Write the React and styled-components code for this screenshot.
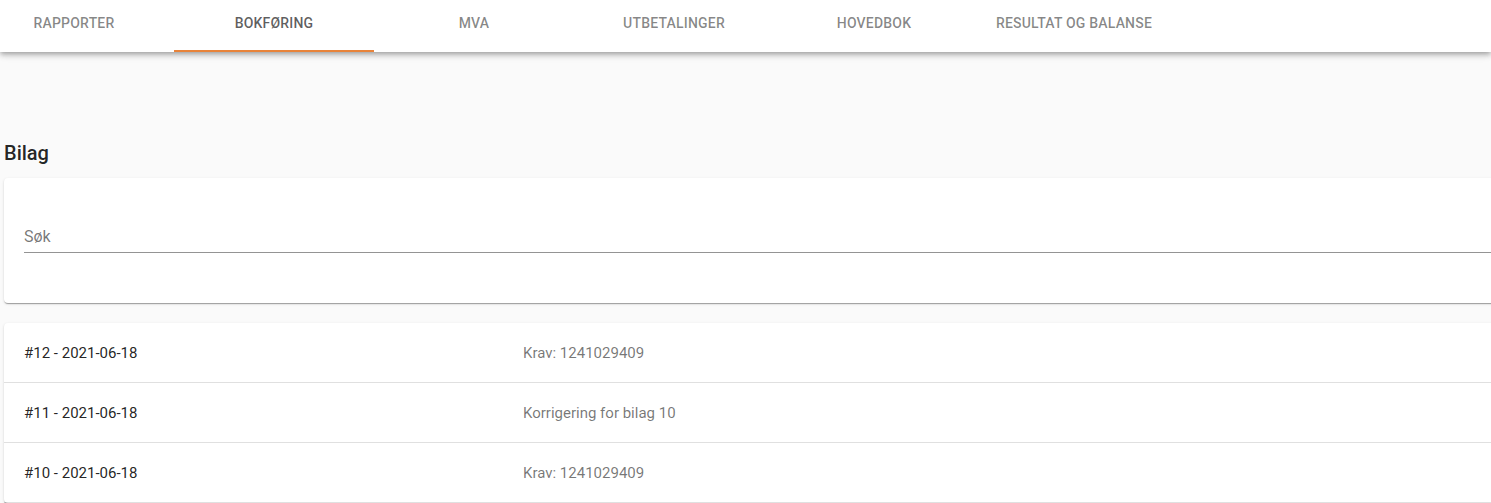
import React from 'react';
import styled, { createGlobalStyle } from 'styled-components';

const GlobalStyle = createGlobalStyle`
  body {
    margin: 0;
    background: #fafafa;
    font-family: Roboto, "Liberation Sans", Arial, sans-serif;
    overflow-x: hidden;
  }
`;

const TabBar = styled.header`
  background: #fff;
  height: 52px;
  box-shadow: 0 2px 4px -1px rgba(0,0,0,.2), 0 4px 5px 0 rgba(0,0,0,.14), 0 1px 10px 0 rgba(0,0,0,.12);
  overflow: hidden;
  position: relative;
  z-index: 1;
`;

const TabTrack = styled.nav`
  display: flex;
  height: 100%;
  margin-left: -26px;
`;

const Tab = styled.div`
  position: relative;
  width: 200px;
  flex: none;
  display: flex;
  align-items: center;
  justify-content: center;
  padding-bottom: 6px;
  box-sizing: border-box;
  font-size: 14px;
  font-weight: 500;
  letter-spacing: 0.2px;
  text-transform: uppercase;
  color: ${p => (p.$active ? 'rgba(0,0,0,0.64)' : 'rgba(0,0,0,0.48)')};

  &::after {
    content: '';
    display: ${p => (p.$active ? 'block' : 'none')};
    position: absolute;
    left: 0;
    right: 0;
    bottom: 0;
    height: 2px;
    background: #e8833a;
  }
`;

const Main = styled.main`
  width: 1520px;
  padding: 85px 0 0 4px;
`;

const Heading = styled.h2`
  margin: 0 0 9px;
  font-size: 20px;
  font-weight: 500;
  line-height: 32px;
  color: rgba(0,0,0,0.87);
`;

const Card = styled.section`
  background: #fff;
  border-radius: 4px;
  box-shadow: 0 2px 1px -1px rgba(0,0,0,.2), 0 1px 1px 0 rgba(0,0,0,.14), 0 1px 3px 0 rgba(0,0,0,.12);
  margin-bottom: 20px;
`;

const SearchBox = styled.div`
  padding: 44px 20px 50px;
`;

const SearchField = styled.label`
  display: block;
  border-bottom: 1px solid rgba(0,0,0,0.42);
  padding: 5px 0 6px;
`;

const SearchInput = styled.input`
  border: 0;
  outline: none;
  background: transparent;
  width: 100%;
  font: 400 16px/19px Roboto, "Liberation Sans", Arial, sans-serif;
  color: rgba(0,0,0,0.87);
  padding: 0;

  &::placeholder {
    color: rgba(0,0,0,0.54);
    opacity: 1;
  }
`;

const Row = styled.div`
  display: grid;
  grid-template-columns: 499px 1fr;
  align-items: center;
  height: 59px;
  padding: 0 20px;
  font-size: 15px;
  border-bottom: 1px solid rgba(0,0,0,0.12);
`;

const Title = styled.span`
  color: rgba(0,0,0,0.87);
`;

const Desc = styled.span`
  color: rgba(0,0,0,0.54);
`;

const tabs = ['Rapporter', 'Bokføring', 'MVA', 'Utbetalinger', 'Hovedbok', 'Resultat og balanse'];

const entries = [
  { id: 12, date: '2021-06-18', text: 'Krav: 1241029409' },
  { id: 11, date: '2021-06-18', text: 'Korrigering for bilag 10' },
  { id: 10, date: '2021-06-18', text: 'Krav: 1241029409' },
];

const App = () => (
  <>
    <GlobalStyle />
    <TabBar>
      <TabTrack>
        {tabs.map((t, i) => (
          <Tab key={t} $active={i === 1}>{t}</Tab>
        ))}
      </TabTrack>
    </TabBar>
    <Main>
      <Heading>Bilag</Heading>
      <Card>
        <SearchBox>
          <SearchField>
            <SearchInput placeholder="Søk" />
          </SearchField>
        </SearchBox>
      </Card>
      <Card>
        {entries.map(e => (
          <Row key={e.id}>
            <Title>#{e.id} - {e.date}</Title>
            <Desc>{e.text}</Desc>
          </Row>
        ))}
      </Card>
    </Main>
  </>
);

export default App;
